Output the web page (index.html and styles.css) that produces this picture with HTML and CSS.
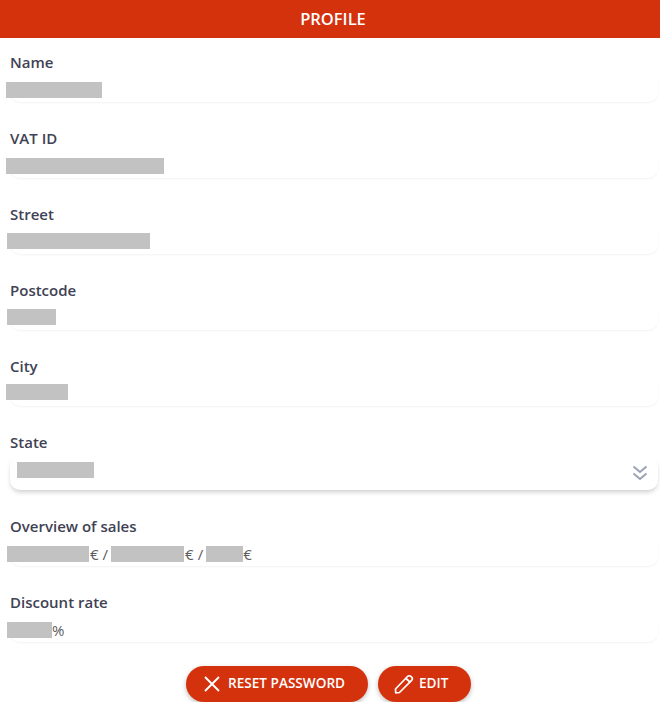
FILE: index.html
```html
<!DOCTYPE html>
<html lang="en">
<head>
  <meta charset="UTF-8" />
  <meta name="viewport" content="width=device-width, initial-scale=1.0"/>
  <title>Profile</title>
  <link rel="stylesheet" href="styles.css">
</head>
<body>
  <header class="title">PROFILE</header>

  <main class="fields">
    <div class="field">
      <label>Name</label>
      <div class="value"><span class="blank name"></span></div>
    </div>
    <div class="field">
      <label>VAT ID</label>
      <div class="value"><span class="blank vat"></span></div>
    </div>
    <div class="field">
      <label>Street</label>
      <div class="value"><span class="blank street"></span></div>
    </div>
    <div class="field">
      <label>Postcode</label>
      <div class="value"><span class="blank postcode"></span></div>
    </div>
    <div class="field">
      <label>City</label>
      <div class="value"><span class="blank city"></span></div>
    </div>
    <div class="field">
      <label>State</label>
      <div class="value select">
        <span class="blank state"></span>
        <svg class="chevrons" viewBox="0 0 16 16" width="16" height="16" fill="none" stroke="#9aa1b3" stroke-width="1.9">
          <path d="M1.5 1.5 8 7l6.5-5.5"/>
          <path d="M1.5 8.5 8 14l6.5-5.5"/>
        </svg>
      </div>
    </div>
    <div class="field">
      <label>Overview of sales</label>
      <div class="value sales">
        <span class="blank sales-a"></span><span class="unit">€</span><span class="sep">/</span>
        <span class="blank sales-b"></span><span class="unit">€</span><span class="sep">/</span>
        <span class="blank sales-c"></span><span class="unit">€</span>
      </div>
    </div>
    <div class="field">
      <label>Discount rate</label>
      <div class="value sales">
        <span class="blank discount"></span><span class="unit">%</span>
      </div>
    </div>
  </main>

  <div class="actions">
    <button class="reset">
      <svg viewBox="0 0 16 16" width="16" height="16" fill="none" stroke="#fff" stroke-width="1.9">
        <path d="M1 1l14 14M15 1 1 15"/>
      </svg>
      <span class="caption">RESET PASSWORD</span>
    </button>
    <button class="edit">
      <svg viewBox="0 0 20 20" width="20" height="20" fill="none" stroke="#fff" stroke-width="1.7" stroke-linejoin="round">
        <path d="M1.5 15 13.5 2.5c1-1 2.4-1 3.3-.1l.8.8c.9.9.9 2.3 0 3.2L5.5 18.5l-3.8.4z"/>
        <path d="M12 4.5l4.5 4"/>
      </svg>
      <span class="caption">EDIT</span>
    </button>
  </div>
</body>
</html>
```

FILE: styles.css
```css
* {
  box-sizing: border-box;
}

body {
  margin: 0;
  background: #fff;
  font-family: "Open Sans", "Noto Sans", sans-serif;
  color: #3f4254;
}

.title {
  height: 38px;
  padding-left: 6px;
  line-height: 38px;
  background: #d4310d;
  color: #fff;
  text-align: center;
  font-size: 16.5px;
  font-weight: 600;
}

.fields {
  padding: 12px 2px 0 10px;
}

.field {
  margin-bottom: 24px;
}

.field label {
  display: block;
  height: 24px;
  line-height: 25px;
  font-size: 15px;
  font-weight: 600;
}

.value {
  display: flex;
  align-items: flex-start;
  height: 28px;
  padding-top: 8px;
  border-radius: 10px;
  box-shadow: 0 1px 2px rgba(0, 0, 0, 0.05);
}

.blank {
  display: block;
  flex: none;
  height: 16px;
  background: #c2c2c2;
}

.name {
  width: 96px;
  margin-left: -4px;
}

.vat {
  width: 158px;
  margin-left: -4px;
}

.street {
  width: 143px;
  margin-top: -1px;
  margin-left: -3px;
}

.postcode {
  width: 49px;
  margin-top: -1px;
  margin-left: -3px;
}

.city {
  width: 62px;
  margin-top: -2px;
  margin-left: -4px;
}

.select {
  position: relative;
  height: 34px;
  margin-top: 2px;
  padding: 6px 0 0 7px;
  box-shadow: 0 3px 5px -1px rgba(0, 0, 0, 0.2);
}

.state {
  width: 77px;
}

.chevrons {
  position: absolute;
  right: 10px;
  top: 9px;
}

.sales {
  font-size: 15px;
  line-height: 16px;
  color: #5b5b5b;
}

.unit {
  margin-left: 1px;
}

.sales-c + .unit,
.discount + .unit {
  margin-left: 0;
}

.sep {
  margin: 0 3px 0 4px;
}

.sales-a {
  width: 82px;
  margin-left: -3px;
}

.sales-b {
  width: 73px;
}

.sales-c {
  width: 37px;
}

.discount {
  width: 45px;
  margin-left: -3px;
}

.actions {
  display: flex;
  justify-content: center;
  gap: 10px;
  padding-right: 3px;
}

button {
  display: flex;
  align-items: center;
  height: 36px;
  border: none;
  border-radius: 18px;
  background: #d4310d;
  color: #fff;
  font-family: inherit;
  font-size: 13.6px;
  font-weight: 600;
  box-shadow: 0 2px 5px rgba(0, 0, 0, 0.25);
}

.caption {
  margin-bottom: 3px;
}

.reset {
  gap: 8px;
  width: 182px;
  padding: 0 0 0 18px;
}

.edit {
  gap: 5px;
  width: 93px;
  padding: 0 0 0 16px;
}
```
